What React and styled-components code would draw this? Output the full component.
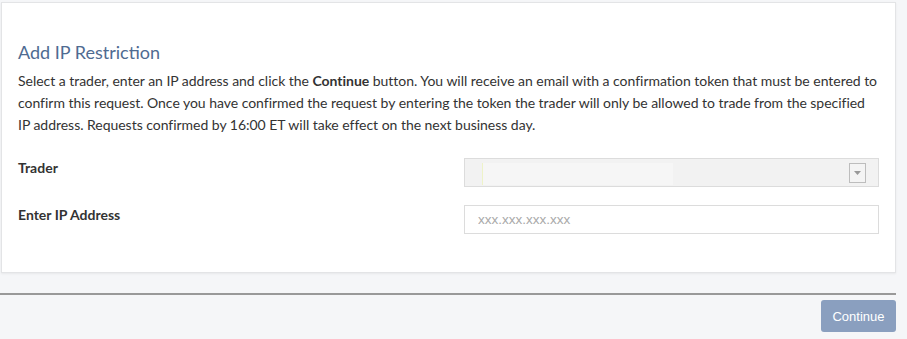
import React from 'react';
import styled, { createGlobalStyle } from 'styled-components';

const GlobalStyle = createGlobalStyle`
  body {
    margin: 0;
    background: #f5f6f8;
    font-family: Lato, "Open Sans", sans-serif;
    color: #333;
  }
`;

const Page = styled.div`
  width: 896px;
  padding-top: 2px;
`;

const Card = styled.section`
  margin-left: 1px;
  background: #fff;
  border: 1px solid #e3e4e6;
  box-shadow: 0 1px 2px rgba(0, 0, 0, 0.06);
  padding: 37px 16px 38px 16px;
`;

const Title = styled.h3`
  margin: 0 0 6px;
  font-size: 18px;
  font-weight: 400;
  color: #4f6b91;
  line-height: 24px;
`;

const Intro = styled.p`
  margin: 0 0 22px 0;
  font-size: 14px;
  line-height: 22px;
  letter-spacing: -0.03px;
  color: #333;

  strong {
    font-weight: 700;
  }
`;

const FormGrid = styled.div`
  display: grid;
  grid-template-columns: 1fr 415px;
  row-gap: 18px;
  align-items: start;
`;

const Label = styled.label`
  font-size: 14px;
  font-weight: 700;
  color: #333;
  line-height: 20px;
`;

const SelectBox = styled.div`
  height: 29px;
  box-sizing: border-box;
  border: 1px solid #dcdcdc;
  background: #f2f2f2;
  display: flex;
  align-items: center;
  padding: 0 12px 0 17px;
`;

const SelectValue = styled.div`
  width: 190px;
  height: 22px;
  margin-top: 2px;
  background: #f6f6f6;
  border-left: 1px solid #eef3c8;
`;

const ArrowButton = styled.div`
  margin-left: auto;
  width: 15px;
  height: 18px;
  border: 1px solid #bdbdbd;
  background: #f4f4f4;
  display: flex;
  align-items: center;
  justify-content: center;
`;

const TextInput = styled.input`
  height: 29px;
  box-sizing: border-box;
  border: 1px solid #dcdcdc;
  background: #fff;
  padding: 0 13px;
  font-family: "Liberation Sans", Arial, sans-serif;
  font-size: 13.5px;
  color: #333;
  outline: none;

  &::placeholder {
    color: #a9a9a9;
  }
`;

const Divider = styled.hr`
  margin: 20px 0 0;
  border: none;
  height: 2px;
  background: #999;
`;

const Footer = styled.div`
  display: flex;
  justify-content: flex-end;
  padding-top: 5px;
`;

const Button = styled.button`
  width: 75px;
  height: 32px;
  border: none;
  border-radius: 3px;
  background: #8a9fbf;
  color: #fff;
  font-family: "Liberation Sans", Arial, sans-serif;
  font-size: 13px;
  cursor: pointer;
`;

export default function App() {
  return (
    <>
      <GlobalStyle />
      <Page>
        <Card>
          <Title>Add IP Restriction</Title>
          <Intro>
            Select a trader, enter an IP address and click the <strong>Continue</strong> button. You will receive an
            email with a confirmation token that must be entered to confirm this request. Once you have confirmed the
            request by entering the token the trader will only be allowed to trade from the specified IP address.
            Requests confirmed by 16:00 ET will take effect on the next business day.
          </Intro>
          <FormGrid>
            <Label>Trader</Label>
            <SelectBox>
              <SelectValue />
              <ArrowButton>
                <svg width="7" height="4" viewBox="0 0 7 4">
                  <path d="M0 0h7L3.5 4z" fill="#999" />
                </svg>
              </ArrowButton>
            </SelectBox>
            <Label>Enter IP Address</Label>
            <TextInput placeholder="xxx.xxx.xxx.xxx" autoFocus />
          </FormGrid>
        </Card>
        <Divider />
        <Footer>
          <Button>Continue</Button>
        </Footer>
      </Page>
    </>
  );
}
